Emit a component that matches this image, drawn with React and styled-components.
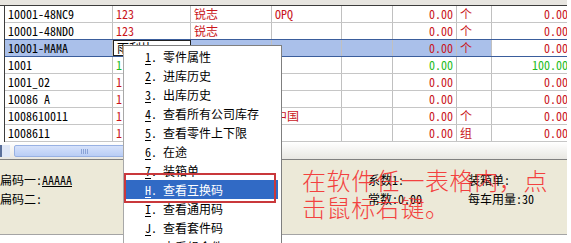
import React from "react";
import styled, { createGlobalStyle } from "styled-components";

const Global = createGlobalStyle`
  html, body {
    margin: 0;
    padding: 0;
    background: #fff;
    overflow: hidden;
  }
`;

const mono = `"Noto Sans Mono CJK SC", "Liberation Mono", "Noto Sans CJK SC", monospace`;

const Screen = styled.div`
  position: relative;
  width: 571px;
  height: 243px;
  background: #fff;
  overflow: hidden;
  font-family: ${mono};
  font-size: 12px;
`;

const Frame = styled.div`
  width: 567px;
  display: flex;
  flex-direction: column;
`;

const TopStrip = styled.div`
  height: 5px;
  background: #e7e5e0;
  border-bottom: 1px solid #3c3c3c;
`;

const Grid = styled.div`
  margin-left: 4px;
  border-left: 1px solid #3c3c3c;
  overflow: hidden;
`;

const Row = styled.div`
  display: grid;
  grid-template-columns: 108px 78px 81px 70px 51px 64px 35px 80px;
  height: 16px;
  border-bottom: 1px solid ${(p) => (p.$selected ? "#3a5d9c" : "#c6c6c6")};
  box-shadow: ${(p) => (p.$selected ? "0 -1px 0 #3a5d9c" : "none")};
  background: ${(p) => (p.$selected ? "#aac0ea" : "#fff")};
  position: relative;
`;

const Cell = styled.div`
  line-height: 16px;
  padding: ${(p) => (p.$right ? "0 3px 0 0" : "0 0 0 3px")};
  text-align: ${(p) => (p.$right ? "right" : "left")};
  color: ${(p) => p.$color || "#000"};
  border-right: 1px solid #c0c0c0;
  white-space: nowrap;
  overflow: hidden;
  background: ${(p) => (p.$white ? "#fff" : "transparent")};
`;

const EditCell = styled.div`
  line-height: 14px;
  padding-left: 3px;
  border: 1px solid #222;
  background: #fff;
  white-space: nowrap;
  overflow: hidden;
`;

const Track = styled.div`
  height: 17px;
  background: linear-gradient(#ffffff, #e8e7e2);
  display: flex;
  align-items: center;
  padding-top: 1px;
  box-sizing: border-box;
`;

const Scrollbar = styled.div`
  display: flex;
  align-items: center;
  gap: 4px;
  height: 12px;
  width: 300px;
`;

const Arrow = styled.div`
  width: 10px;
  height: 12px;
  background: linear-gradient(90deg, #5a6f9a 0 2px, #dfe7f7 2px);
`;

const Thumb = styled.div`
  width: 138px;
  height: 10px;
  border: 1px solid #98b1e3;
  border-radius: 2px;
  background: linear-gradient(#d6e2fb, #b9cdf5);
  display: flex;
  justify-content: center;
  align-items: center;
  gap: 1px;

  span {
    width: 1px;
    height: 5px;
    background: #8aa3d6;
  }
`;

const Panel = styled.div`
  border-top: 1px solid #808080;
  border-bottom: 1px solid #a4a4a4;
  background: #ece9d8;
  height: 76px;
  display: flex;
  padding-top: 12px;
  box-sizing: border-box;
`;

const Field = styled.div`
  display: flex;
  flex-direction: column;
  width: ${(p) => p.$w}px;
  line-height: 16px;
  gap: 3px;
  color: #000;

  u {
    text-decoration: underline;
  }
`;

const Note = styled.div`
  position: absolute;
  left: 302px;
  top: 166px;
  font-family: "Noto Sans CJK SC", sans-serif;
  font-size: 24px;
  font-weight: 300;
  line-height: 27px;
  letter-spacing: 0.6px;
  color: #f42a2a;
  opacity: 0.88;
  white-space: nowrap;
`;

const Menu = styled.div`
  position: absolute;
  left: 123px;
  top: 45px;
  width: 159px;
  height: 220px;
  box-sizing: border-box;
  background: #fff;
  border: 1px solid #7f7f7f;
  border-left-color: #a8a8a8;
  padding-top: 1px;
  font-family: ${mono};
  font-size: 12px;
`;

const Item = styled.div`
  height: 19px;
  margin: 0 3px 0 2px;
  display: flex;
  align-items: center;
  background: ${(p) => (p.$active ? "#316ac5" : "transparent")};
  color: ${(p) => (p.$active ? "#fff" : "#000")};
`;

const Key = styled.span`
  width: 18px;
  margin-left: 19px;

  u {
    text-decoration: underline;
    text-underline-offset: 2px;
  }
`;

const Mark = styled.div`
  position: absolute;
  left: 124px;
  top: 173px;
  width: 152px;
  height: 30px;
  box-sizing: border-box;
  border: 2px solid #c9383b;
`;

const RED = "#c9161c";
const GREEN = "#1dbb1d";

const rows = [
  ["10001-48NC9", "123", "锐志", "OPQ", "", "0.00", "个", "0.00"],
  ["10001-48ND0", "123", "锐志", "", "", "0.00", "个", "0.00"],
  ["10001-MAMA", "雨刮片", "", "", "", "0.00", "个", "0.00"],
  ["1001", "1", "", "", "", "0.00", "", "100.00"],
  ["1001_02", "1", "", "", "", "0.00", "", "0.00"],
  ["10086 A", "1", "", "", "", "0.00", "", "0.00"],
  ["1008610011", "1", "", "中国", "", "0.00", "个", "0.00"],
  ["1008611", "1", "", "", "", "0.00", "组", "0.00"],
];

const menu = [
  ["1", "零件属性"],
  ["2", "进库历史"],
  ["3", "出库历史"],
  ["4", "查看所有公司库存"],
  ["5", "查看零件上下限"],
  ["6", "在途"],
  ["7", "装箱单"],
  ["H", "查看互换码"],
  ["I", "查看通用码"],
  ["J", "查看套件码"],
  ["K", "查看组合件"],
];

export default function App() {
  return (
    <Screen>
      <Global />
      <Frame>
        <TopStrip />
        <Grid>
          {rows.map((r, i) => {
            const selected = i === 2;
            const color = i === 3 ? GREEN : RED;
            return (
              <Row key={i} $selected={selected}>
                <Cell>{r[0]}</Cell>
                {selected ? (
                  <EditCell>{r[1]}</EditCell>
                ) : (
                  <Cell $color={color}>{r[1]}</Cell>
                )}
                <Cell $color={RED}>{r[2]}</Cell>
                <Cell $color={RED}>{r[3]}</Cell>
                <Cell>{r[4]}</Cell>
                <Cell $right $color={color}>{r[5]}</Cell>
                <Cell $color={RED}>{r[6]}</Cell>
                <Cell $right $color={color} $white={selected}>
                  {r[7]}
                </Cell>
              </Row>
            );
          })}
        </Grid>
        <Track>
          <Scrollbar>
            <Arrow />
            <Thumb>
              <span />
              <span />
              <span />
              <span />
            </Thumb>
          </Scrollbar>
        </Track>
        <Panel>
          <Field $w={368}>
            <div>
              扁码一:<u>AAAAA</u>
            </div>
            <div>扁码二:</div>
          </Field>
          <Field $w={100}>
            <div>系数1:</div>
            <div>常数:0.00</div>
          </Field>
          <Field $w={99}>
            <div>装箱单:</div>
            <div>每车用量:30</div>
          </Field>
        </Panel>
      </Frame>

      <Note>
        在软件任一表格内，点
        <br />
        击鼠标右键。
      </Note>

      <Menu>
        {menu.map(([k, label]) => (
          <Item key={k} $active={k === "H"}>
            <Key>
              <u>{k}</u>.
            </Key>
            <span>{label}</span>
          </Item>
        ))}
      </Menu>
      <Mark />
    </Screen>
  );
}
